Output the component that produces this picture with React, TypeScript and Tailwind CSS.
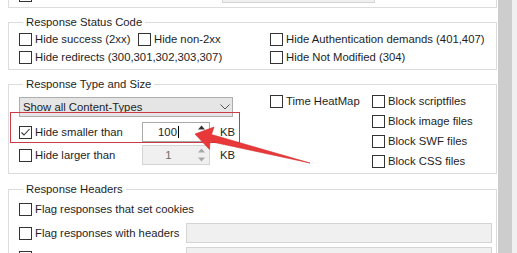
import clsx from 'clsx';

function Box({ checked }: { checked?: boolean }) {
  return (
    <span className="flex h-[13px] w-[13px] shrink-0 items-center justify-center border border-[#333] bg-white">
      {checked && (
        <svg width="11" height="11" viewBox="0 0 11 11">
          <path d="M1.5 5.5 L4 8 L9.5 2" fill="none" stroke="#333" strokeWidth="1.1" />
        </svg>
      )}
    </span>
  );
}

function Option({ label, checked, className }: { label: string; checked?: boolean; className?: string }) {
  return (
    <label className={clsx('flex items-center gap-[3px] whitespace-nowrap', className)}>
      <Box checked={checked} />
      <span>{label}</span>
    </label>
  );
}

function Spinner({ value, disabled }: { value: string; disabled?: boolean }) {
  const arrow = disabled ? '#a8a8a8' : '#333';
  return (
    <div
      className={clsx(
        'flex h-[20px] w-[68px] border',
        disabled ? 'border-[#d4d4d4] bg-[#f0f0f0] text-[#6d6d6d]' : 'border-[#a9a9a9] bg-white',
      )}
    >
      <div className="flex flex-1 items-center justify-center">
        {value}
        {!disabled && <span className="ml-px h-[12px] w-px bg-black" />}
      </div>
      <div className="flex w-[15px] flex-col">
        <div className="flex flex-1 items-center justify-center">
          <svg width="7" height="5" viewBox="0 0 7 5">
            <path d="M0 4.5 L3.5 0.5 L7 4.5 Z" fill={arrow} />
          </svg>
        </div>
        <div className="flex flex-1 items-center justify-center">
          <svg width="7" height="5" viewBox="0 0 7 5">
            <path d="M0 0.5 L3.5 4.5 L7 0.5 Z" fill={arrow} />
          </svg>
        </div>
      </div>
    </div>
  );
}

function Group({ title, className, children }: { title: string; className?: string; children: React.ReactNode }) {
  return (
    <fieldset className={clsx('ml-2 mr-px shrink-0 border border-[#dcdcdc] pl-[10px]', className)}>
      <legend className="ml-[4px] px-[3px] leading-[14px]">{title}</legend>
      {children}
    </fieldset>
  );
}

export default function App() {
  return (
    <div className="relative flex h-[253px] w-[517px] overflow-hidden bg-white font-['Liberation_Sans',Arial,sans-serif] text-[11.3px] leading-[14px] text-[#1e1e1e]">
      <div className="flex w-[498px] flex-col">
        {/* end of the section above */}
        <div className="ml-2 mr-px flex h-[8px] shrink-0 items-start border-x border-b border-[#dcdcdc]">
          <span className="ml-[10px] -mt-[11px] h-[13px] w-[13px] border border-[#333]" />
          <span className="ml-[190px] -mt-[17px] h-[20px] w-[153px] border border-[#d4d4d4] bg-[#f0f0f0]" />
        </div>

        <Group title="Response Status Code" className="mt-[7px] pt-px pb-[3px]">
          <div className="grid grid-cols-[251px_1fr]">
            <div className="flex h-[18px] items-center">
              <Option label="Hide success (2xx)" className="w-[119px]" />
              <Option label="Hide non-2xx" />
            </div>
            <div className="flex h-[18px] items-center">
              <Option label="Hide Authentication demands (401,407)" />
            </div>
            <div className="flex h-[18px] items-center">
              <Option label="Hide redirects (300,301,302,303,307)" />
            </div>
            <div className="flex h-[18px] items-center">
              <Option label="Hide Not Modified (304)" />
            </div>
          </div>
        </Group>

        <Group title="Response Type and Size" className="mt-[7px] pb-[2px]">
          <div className="flex">
            <div className="flex w-[251px] flex-col">
              <div className="mt-[6px] flex h-[20px] w-[214px] items-center justify-between border border-[#adadad] bg-[#e5e5e5] pl-[3px] pr-[2px]">
                <span>Show all Content-Types</span>
                <svg width="10" height="6" viewBox="0 0 10 6">
                  <path d="M0.5 0.5 L5 5 L9.5 0.5" fill="none" stroke="#555" strokeWidth="1" />
                </svg>
              </div>
              <div className="mt-[5px] flex h-[20px] items-center">
                <Option label="Hide smaller than" checked className="w-[123px]" />
                <Spinner value="100" />
                <span className="ml-[10px]">KB</span>
              </div>
              <div className="mt-[3px] flex h-[20px] items-center">
                <Option label="Hide larger than" className="w-[123px]" />
                <Spinner value="1" disabled />
                <span className="ml-[10px]">KB</span>
              </div>
            </div>
            <div className="w-[102px]">
              <div className="flex h-[20px] items-center">
                <Option label="Time HeatMap" />
              </div>
            </div>
            <div className="flex flex-col">
              {['Block scriptfiles', 'Block image files', 'Block SWF files', 'Block CSS files'].map((item) => (
                <div key={item} className="flex h-[20px] items-center">
                  <Option label={item} />
                </div>
              ))}
            </div>
          </div>
        </Group>

        <Group title="Response Headers" className="mt-[8px] pb-2">
          <div className="flex flex-col gap-[4px] pt-[3px]">
            <div className="flex h-[20px] items-center">
              <Option label="Flag responses that set cookies" />
            </div>
            <div className="flex h-[20px] items-center">
              <Option label="Flag responses with headers" className="w-[167px]" />
              <span className="mr-[4px] h-[20px] flex-1 border border-[#d4d4d4] bg-[#f0f0f0]" />
            </div>
            <div className="flex h-[20px] items-center">
              <Option label="Delete response headers" className="w-[167px]" />
              <span className="mr-[4px] h-[20px] flex-1 border border-[#d4d4d4] bg-[#f0f0f0]" />
            </div>
          </div>
        </Group>
      </div>

      {/* scrollbar */}
      <div className="flex w-[19px] bg-[#f0f0f0]">
        <div className="w-[14px] bg-[#cdcdcd]" />
      </div>

      {/* annotation: highlight box + arrow */}
      <div className="absolute left-[10px] top-[112px] h-[31px] w-[230px] border border-[#cc3b45]" />
      <svg className="absolute left-0 top-0" width="517" height="253" viewBox="0 0 517 253">
        <path
          d="M195 134 L214 127 L211.5 134.5 L310 163 L210 141.5 L209.5 149.5 Z"
          fill="#e8383a"
          stroke="#d42f31"
          strokeWidth="0.6"
          strokeLinejoin="round"
        />
      </svg>
    </div>
  );
}
